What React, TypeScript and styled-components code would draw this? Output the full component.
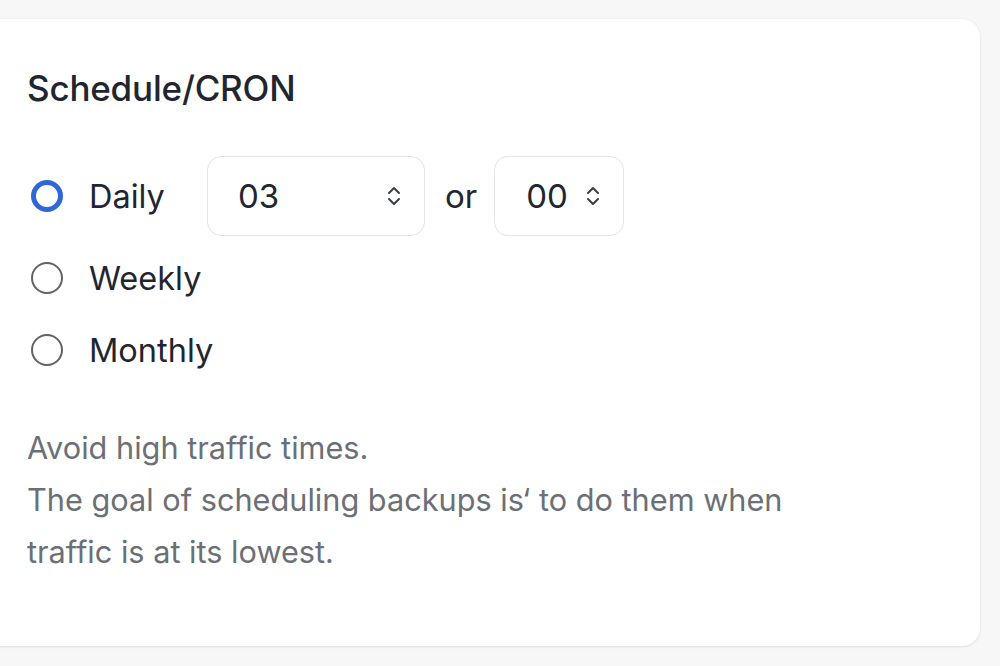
import React from "react";
import styled, { createGlobalStyle } from "styled-components";

const Global = createGlobalStyle`
  html, body { margin: 0; padding: 0; background: #f7f7f8; }
  body { font-family: Inter, "Noto Sans", sans-serif; overflow: hidden; }
`;

const Page = styled.div`
  width: 1000px;
  height: 666px;
  padding-top: 19px;
  box-sizing: border-box;
`;

const Card = styled.section`
  margin-left: -20px;
  width: 1000px;
  height: 627px;
  box-sizing: border-box;
  background: #ffffff;
  border-radius: 18px;
  box-shadow: 0 1px 3px rgba(0, 0, 0, 0.08), 0 0 0 1px rgba(0, 0, 0, 0.02);
  padding: 48px 0 0 47px;
  display: flex;
  flex-direction: column;
`;

const Title = styled.h2`
  margin: 0;
  font-size: 35px;
  line-height: 42px;
  font-weight: 500;
  color: #1f2630;
  letter-spacing: -0.2px;
`;

const Options = styled.div`
  margin-top: 47px;
  padding-left: 4px;
  display: flex;
  flex-direction: column;
  gap: 12px;
`;

const Row = styled.label<{ $h: number }>`
  display: flex;
  align-items: center;
  height: ${(p) => p.$h}px;
`;

const Radio = styled.span<{ $checked?: boolean }>`
  width: 32px;
  height: 32px;
  box-sizing: border-box;
  border-radius: 50%;
  border: ${(p) => (p.$checked ? "5px solid #2f66d8" : "2.5px solid #5f6368")};
  flex: none;
`;

const Label = styled.span<{ $w?: number }>`
  margin-left: 26px;
  font-size: 32.5px;
  color: #1f2630;
  width: ${(p) => (p.$w ? `${p.$w}px` : "auto")};
`;

const Select = styled.div<{ $w: number; $pl: number }>`
  width: ${(p) => p.$w}px;
  height: 80px;
  box-sizing: border-box;
  border: 1.5px solid #e3e4e7;
  border-radius: 14px;
  display: flex;
  align-items: center;
  padding-left: ${(p) => p.$pl}px;
  padding-right: 22px;
  font-size: 33px;
  color: #1f2630;
  justify-content: space-between;
`;

const Or = styled.span`
  font-size: 33px;
  color: #1f2630;
  margin: 0 17px 0 20px;
`;

const Chevrons = () => (
  <svg width="16" height="24" viewBox="0 0 16 24" fill="none" stroke="#3a3f46" strokeWidth="2" strokeLinecap="round" strokeLinejoin="round">
    <path d="M3 9 L8 4 L13 9" />
    <path d="M3 15 L8 20 L13 15" />
  </svg>
);

const Help = styled.p`
  margin: 42px 0 0;
  font-size: 30.7px;
  line-height: 52px;
  color: #6b6f76;
  width: 790px;
`;

export default function App() {
  return (
    <>
      <Global />
      <Page>
        <Card>
          <Title>Schedule/CRON</Title>
          <Options>
            <Row $h={80}>
              <Radio $checked />
              <Label $w={118}>Daily</Label>
              <Select $w={218} $pl={30}>
                <span>03</span>
                <Chevrons />
              </Select>
              <Or>or</Or>
              <Select $w={130} $pl={31}>
                <span>00</span>
                <Chevrons />
              </Select>
            </Row>
            <Row $h={60}>
              <Radio />
              <Label>Weekly</Label>
            </Row>
            <Row $h={60}>
              <Radio />
              <Label>Monthly</Label>
            </Row>
          </Options>
          <Help>
            Avoid high traffic times.
            <br />
            The goal of scheduling backups is‘ to do them when traffic is at its lowest.
          </Help>
        </Card>
      </Page>
    </>
  );
}
